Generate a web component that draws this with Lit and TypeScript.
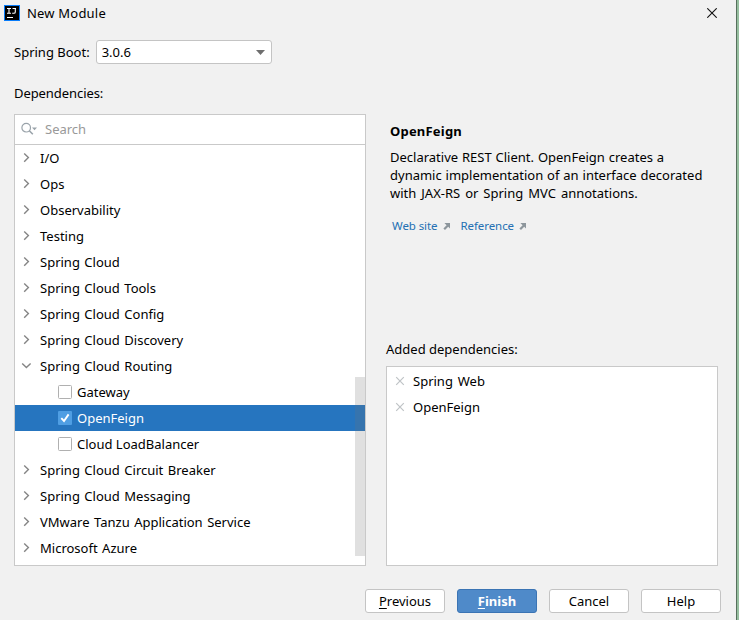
import { LitElement, html, css, svg } from "lit";
import { customElement, property } from "lit/decorators.js";
import { classMap } from "lit/directives/class-map.js";

interface TreeRow {
  label: string;
  kind: "group" | "open" | "leaf";
  checked?: boolean;
}

const ROWS: TreeRow[] = [
  { label: "I/O", kind: "group" },
  { label: "Ops", kind: "group" },
  { label: "Observability", kind: "group" },
  { label: "Testing", kind: "group" },
  { label: "Spring Cloud", kind: "group" },
  { label: "Spring Cloud Tools", kind: "group" },
  { label: "Spring Cloud Config", kind: "group" },
  { label: "Spring Cloud Discovery", kind: "group" },
  { label: "Spring Cloud Routing", kind: "open" },
  { label: "Gateway", kind: "leaf" },
  { label: "OpenFeign", kind: "leaf", checked: true },
  { label: "Cloud LoadBalancer", kind: "leaf" },
  { label: "Spring Cloud Circuit Breaker", kind: "group" },
  { label: "Spring Cloud Messaging", kind: "group" },
  { label: "VMware Tanzu Application Service", kind: "group" },
  { label: "Microsoft Azure", kind: "group" },
];

@customElement("tree-row")
class TreeRowElement extends LitElement {
  @property({ attribute: false }) row!: TreeRow;

  static styles = css`
    :host { display: block; }
    .row { display: flex; align-items: center; height: 26px; padding-left: 5px; white-space: nowrap; word-spacing: 1.1px; }
    .leaf { padding-left: 43px; word-spacing: 0; }
    .selected { background: #2675bf; color: #fff; }
    svg { display: block; flex: none; }
    .arrow { margin-right: 8px; }
    .check { margin-right: 5px; }
  `;

  render() {
    const { label, kind, checked } = this.row;
    const icon =
      kind === "leaf"
        ? html`<svg class="check" width="14" height="14" viewBox="0 0 14 14">
            ${checked
              ? svg`<rect width="14" height="14" rx="1" fill="#4f9ee3"/><path d="M3.3 7.2 6 10l4.6-6.6" fill="none" stroke="#fff" stroke-width="1.9"/>`
              : svg`<rect x=".5" y=".5" width="13" height="13" rx="1" fill="#fff" stroke="#b0b0b0"/>`}
          </svg>`
        : html`<svg class="arrow" width="12" height="12" viewBox="0 0 12 12">
            <path d=${kind === "open" ? "M2.2 3.4 6.4 7.6 10.6 3.4" : "M4.2 1.4 8.4 5.6 4.2 9.8"}
              fill="none" stroke="#858585" stroke-width="1.4" />
          </svg>`;
    return html`<div class=${classMap({ row: true, leaf: kind === "leaf", selected: !!checked })}>
      ${icon}<span>${label}</span>
    </div>`;
  }
}

@customElement("app-root")
class AppRoot extends LitElement {
  static styles = css`
    * { box-sizing: border-box; }
    :host {
      display: block; width: 739px; height: 620px; overflow: hidden;
      font: 13px/18px "Noto Sans", "Open Sans", sans-serif; color: #000;
    }
    svg { display: block; flex: none; }
    .window {
      display: flex; flex-direction: column; width: 739px; height: 620px;
      background: #f1f1f1; border-right: 2px solid #97bfa0; box-shadow: inset -1px 0 #56705d;
    }
    .title { display: flex; align-items: center; height: 26px; padding: 0 20px 0 4px; gap: 7px; letter-spacing: .2px; }
    .title .close { margin-left: auto; }
    .version { display: flex; align-items: center; height: 24px; margin: 14px 0 0 14px; }
    .select {
      display: flex; align-items: center; justify-content: space-between;
      width: 176px; height: 24px; margin-left: 6px; padding: 0 6px 0 5px;
      background: #fff; border: 1px solid #c4c4c4; border-radius: 3px;
    }
    .dependencies { height: 18px; margin: 20px 0 0 14px; letter-spacing: -.07px; }
    .main { display: flex; gap: 20px; height: 452px; margin: 12px 0 0 14px; }
    .panel { position: relative; width: 352px; height: 452px; background: #fff; border: 1px solid #c9c9c9; }
    .search {
      display: flex; align-items: center; height: 30px; padding: 0 0 2px 6px; gap: 7px;
      border-bottom: 1px solid #c9c9c9; color: #999;
    }
    .thumb { position: absolute; right: 0; top: 262px; width: 10px; height: 179px; background: rgba(115, 115, 115, .22); }
    .side { width: 332px; }
    .heading { margin: 8px 0 0 4px; font-weight: 700; letter-spacing: .2px; }
    .text { margin: 8px 0 0 4px; white-space: nowrap; }
    .line { word-spacing: .5px; }
    .line:last-child { word-spacing: 1.6px; }
    .links { display: flex; margin: 15px 0 0 6px; font-size: 11.5px; letter-spacing: -.08px; color: #2470b3; }
    .link { display: flex; align-items: center; gap: 5px; margin-right: 10px; }
    .added { height: 18px; margin-top: 105px; }
    .list { height: 200px; margin-top: 8px; padding-top: 1px; background: #fff; border: 1px solid #c9c9c9; }
    .item { display: flex; align-items: center; height: 26px; padding-left: 8px; gap: 8px; word-spacing: 1.5px; }
    .buttons { display: flex; gap: 12px; margin: 23px 0 0 365px; }
    .button {
      width: 80px; height: 24px; border: 1px solid #c4c4c4; border-radius: 3px;
      background: #fff; text-align: center; line-height: 23px;
    }
    .primary { background: #4f8ac9; border-color: #3b74b4; color: #fff; font-weight: 700; }
    .key { text-decoration: underline; text-underline-offset: 2px; text-decoration-thickness: 1px; text-decoration-skip-ink: none; }
  `;

  private link(label: string) {
    return html`<span class="link"><span>${label}</span>
      <svg width="8" height="8" viewBox="0 0 8 8">
        <path d="M1.4 1H7v5.6L5.2 4.8 2 8 .4 6.4 3.6 3.2Z" fill="#8d969c" />
      </svg></span>`;
  }

  render() {
    return html`<div class="window">
      <div class="title">
        <svg width="16" height="16" viewBox="0 0 16 16">
          <rect width="16" height="16" fill="#087cfa" />
          <rect x="1" y="1" width="14" height="14" fill="#000" />
          <path d="M3 3.5h4M5 3.5v4.7M3 8.2h4M8.5 3.5H12M11.3 3v4q0 1.3-1.4 1.3H8.2M3 12.5h6" fill="none" stroke="#fff" stroke-width="1.1" />
        </svg>
        <span>New Module</span>
        <svg class="close" width="10" height="10" viewBox="0 0 10 10">
          <path d="M.3.3 9.7 9.7M9.7.3.3 9.7" stroke="#111" stroke-width="1.1" />
        </svg>
      </div>
      <div class="version">
        <span>Spring Boot:</span>
        <div class="select">
          <span>3.0.6</span>
          <svg width="9" height="5" viewBox="0 0 9 5"><path d="M0 0h9L4.5 5Z" fill="#6e6e6e" /></svg>
        </div>
      </div>
      <div class="dependencies">Dependencies:</div>
      <div class="main">
        <div class="panel">
          <div class="search">
            <svg width="17" height="14" viewBox="0 0 17 14">
              <circle cx="5.2" cy="5.7" r="4.3" fill="none" stroke="#9aa3aa" stroke-width="1.2" />
              <path d="m8.3 8.8 3.5 3.5" stroke="#9aa3aa" stroke-width="1.6" />
              <path d="M11 5.5h5L13.5 8.2Z" fill="#9aa3aa" />
            </svg>
            <span>Search</span>
          </div>
          ${ROWS.map((row) => html`<tree-row .row=${row}></tree-row>`)}
          <div class="thumb"></div>
        </div>
        <div class="side">
          <div class="heading">OpenFeign</div>
          <div class="text">
            <div class="line">Declarative REST Client. OpenFeign creates a</div>
            <div class="line">dynamic implementation of an interface decorated</div>
            <div class="line">with JAX-RS or Spring MVC annotations.</div>
          </div>
          <div class="links">${this.link("Web site")}${this.link("Reference")}</div>
          <div class="added">Added dependencies:</div>
          <div class="list">
            ${["Spring Web", "OpenFeign"].map(
              (name) => html`<div class="item">
                <svg width="10" height="10" viewBox="0 0 10 10">
                  <path d="m1.2 1.2 7.6 7.6M8.8 1.2 1.2 8.8" stroke="#bfc3c6" stroke-width="1.2" />
                </svg>
                <span>${name}</span>
              </div>`
            )}
          </div>
        </div>
      </div>
      <div class="buttons">
        <div class="button"><span class="key">P</span>revious</div>
        <div class="button primary"><span class="key">F</span>inish</div>
        <div class="button">Cancel</div>
        <div class="button">Help</div>
      </div>
    </div>`;
  }
}
